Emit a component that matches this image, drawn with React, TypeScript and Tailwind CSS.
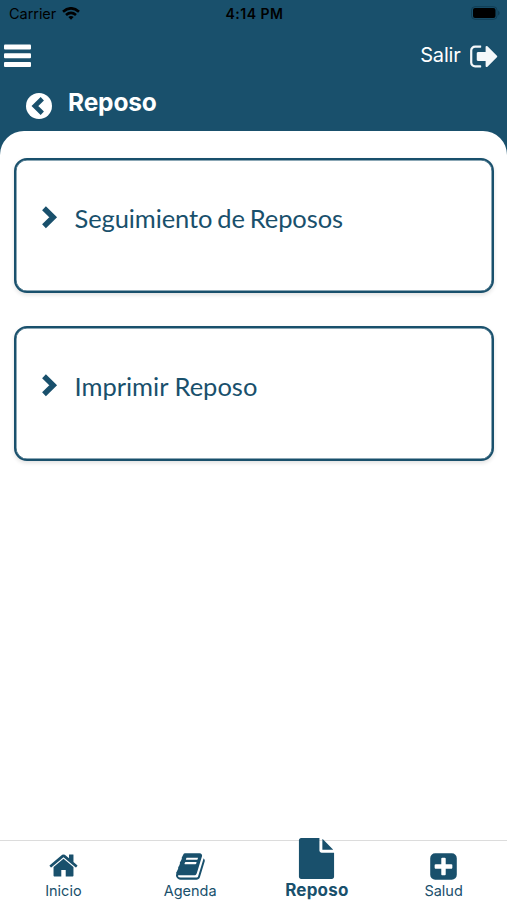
import type { ReactNode } from "react";

const paths = {
  home: "M1472 992v480q0 26-19 45t-45 19h-384v-384h-256v384h-384q-26 0-45-19t-19-45v-480q0-1 .5-3t.5-3l575-474 575 474q1 2 1 6zm223-69l-62 74q-8 9-21 11h-3q-13 0-21-7l-692-577-692 577q-12 8-24 7-13-2-21-11l-62-74q-8-10-7-23.500t11-21.500l719-599q32-26 76-26t76 26l244 204v-195q0-14 9-23t23-9h192q14 0 23 9t9 23v408l219 182q10 8 11 21.500t-7 23.500z",
  book: "M1639 478q40 57 18 129l-275 906q-19 64-76.500 107.500t-122.500 43.500h-923q-77 0-148.500-53.500t-99.500-131.500q-24-67-2-127 0-4 3-27t4-37q1-8-3-21.500t-3-19.500q2-11 8-21t16.500-23.500 16.500-23.500q23-38 45-91.500t30-91.500q3-10 .5-30t-.5-28q3-11 17-28t17-23q21-36 42-92t25-90q1-9-2.500-32t.5-28q4-13 22-30.500t22-22.500q19-26 42.500-84.500t27.500-96.500q1-8-3-25.500t-2-26.500q2-8 9-18t18-23 17-21q8-12 16.500-30.500t15-35 16-36 19.500-32 26.500-23.500 36-11.500 47.500 5.500l-1 3q38-9 51-9h761q74 0 114 56t18 130l-274 906q-36 119-71.500 153.500t-128.500 34.500h-869q-27 0-38 15-11 16-1 43 24 70 144 70h923q29 0 56-15.500t35-41.500l300-987q7-22 5-57 38 15 59 43zm-1064 2q-4 13 2 22.500t20 9.500h608q13 0 25.500-9.500t16.500-22.500l21-64q4-13-2-22.500t-20-9.500h-608q-13 0-25.500 9.500t-16.500 22.500zm-83 256q-4 13 2 22.500t20 9.500h608q13 0 25.500-9.500t16.500-22.500l21-64q4-13-2-22.500t-20-9.500h-608q-13 0-25.500 9.500t-16.500 22.500z",
  file: "M1152 512v-472q22 14 36 28l408 408q14 14 28 36h-472zm-128 32q0 40 28 68t68 28h544v1056q0 40-28 68t-68 28h-1344q-40 0-68-28t-28-68v-1600q0-40 28-68t68-28h800v544z",
  plus: "M1408 960v-128q0-26-19-45t-45-19h-320v-320q0-26-19-45t-45-19h-128q-26 0-45 19t-19 45v320h-320q-26 0-45 19t-19 45v128q0 26 19 45t45 19h320v320q0 26 19 45t45 19h128q26 0 45-19t19-45v-320h320q26 0 45-19t19-45zm256-544v960q0 119-84.500 203.500t-203.500 84.500h-960q-119 0-203.500-84.500t-84.500-203.500v-960q0-119 84.500-203.500t203.500-84.500h960q119 0 203.500 84.500t84.500 203.500z",
  exit: "M704 1440q0 4 1 20t.5 26.500-3 23.500-10 19.500-20.500 6.500h-320q-119 0-203.500-84.500t-84.500-203.500v-704q0-119 84.500-203.500t203.500-84.500h320q13 0 22.500 9.500t9.500 22.500q0 4 1 20t.5 26.500-3 23.500-10 19.500-20.500 6.500h-320q-66 0-113 47t-47 113v704q0 66 47 113t113 47h312l11.500 1 11.500 3 8 5.500 7 9 2 13.500zm928-544q0 26-19 45l-544 544q-19 19-45 19t-45-19-19-45v-288h-448q-26 0-45-19t-19-45v-384q0-26 19-45t45-19h448v-288q0-26 19-45t45-19 45 19l544 544q19 19 19 45z",
};

function Icon({ name, className }: { name: keyof typeof paths; className: string }) {
  return (
    <svg viewBox="0 0 1792 1792" className={className} fill="currentColor">
      <path d={paths[name]} />
    </svg>
  );
}

function StatusBar() {
  return (
    <div className="grid h-7 grid-cols-3 items-center pr-[7px] pl-[9px] text-black">
      <div className="flex items-center gap-[6px]">
        <span className="text-[14.500px] leading-7 tracking-[-0.05px]">Carrier</span>
        <svg viewBox="0 0 18 13" className="-mt-[2px] h-[13px] w-[18px]" fill="none" stroke="currentColor" strokeWidth="2.700">
          <path d="M1 4.700Q9 -2 17 4.700" />
          <path d="M4 8Q9 3.800 14 8" />
          <path d="M9 12.800L6.300 10Q9 7.900 11.700 10Z" fill="currentColor" stroke="none" />
        </svg>
      </div>
      <span className="text-center text-[14px] font-semibold leading-7 tracking-[0.500px]">4:14 PM</span>
      <svg viewBox="0 0 29 14" className="-mt-[2px] h-[14px] w-[29px] justify-self-end">
        <rect x="0.500" y="0.700" width="25.500" height="12.600" rx="3.500" fill="none" stroke="#103d54" />
        <rect x="2" y="2" width="22.500" height="10" rx="2" fill="#000" />
        <path d="M27 4.500Q28.700 5.500 28.700 7T27 9.500Z" fill="#103d54" />
      </svg>
    </div>
  );
}

function Card({ children }: { children: ReactNode }) {
  return (
    <button className="flex h-[135px] w-full items-start rounded-[13px] border-2 border-[#19506c] bg-white pt-[42px] pl-[25px] text-left text-[#19506c] shadow-[inset_0_0_0_0.5px_#19506c,0_2px_4px_rgba(0,0,0,0.12)]">
      <svg viewBox="0 0 18 26" className="mt-[1.500px] h-[26px] w-[18px] shrink-0" fill="none" stroke="currentColor" strokeWidth="5.400">
        <path d="M3 4.200L12.200 13.200L3 22.200" />
      </svg>
      <span className="ml-[15.500px] font-[Lato] text-[25.500px] leading-[32px]">{children}</span>
    </button>
  );
}

export default function App() {
  return (
    <div className="flex h-[900px] w-[507px] flex-col overflow-hidden bg-white font-[Inter,sans-serif]">
      <header className="h-[155px] shrink-0 bg-[#19506c] text-white">
        <StatusBar />
        <div className="flex h-[56px] items-center justify-between pr-[7.500px] pl-1">
          <svg viewBox="0 0 27 24" className="h-6 w-[27px]" fill="currentColor">
            <rect y="0.500" width="27" height="5" rx="1" />
            <rect y="9.200" width="27" height="5" rx="1" />
            <rect y="17.900" width="27" height="5" rx="1" />
          </svg>
          <div className="flex items-center gap-[8px]">
            <span className="-mt-[2px] text-[20px] leading-6 tracking-[-0.200px]">Salir</span>
            <Icon name="exit" className="h-[31px] w-[31px] text-[#f4f8fa]" />
          </div>
        </div>
        <div className="flex h-[47px] items-start pl-[26px]">
          <svg viewBox="0 0 26 26" className="mt-[9px] h-[26px] w-[26px]">
            <circle cx="13" cy="13" r="13" fill="#fff" />
            <path d="M16.300 5.800L8.900 13L16.300 20.200" fill="none" stroke="#19506c" strokeWidth="4.700" />
          </svg>
          <h1 className="ml-4 pt-[3px] text-[24.500px] font-bold leading-[30px] tracking-[-0.150px]">Reposo</h1>
        </div>
        <div className="h-6 rounded-t-[25px] bg-white" />
      </header>

      <main className="flex flex-1 flex-col gap-[33px] pr-[13px] pl-[14px] pt-[3px]">
        <Card>
          <span className="tracking-[-0.100px] [word-spacing:-1.500px]">Seguimiento de Reposos</span>
        </Card>
        <Card>Imprimir Reposo</Card>
      </main>

      <nav className="grid h-[60px] shrink-0 grid-cols-4 border-t border-[#dcdcdc] text-[#19506c]">
        <div className="flex flex-col items-center pt-[9px]">
          <Icon name="home" className="ml-[1px] h-[31px] w-[31px]" />
          <span className="text-[14.500px] leading-5">Inicio</span>
        </div>
        <div className="flex flex-col items-center pt-[10px]">
          <Icon name="book" className="ml-[2px] h-[31px] w-[31px]" />
          <span className="-mt-px text-[14.500px] leading-5">Agenda</span>
        </div>
        <div className="-mt-[3px] flex flex-col items-center">
          <Icon name="file" className="h-[41px] w-[41px] shrink-0" />
          <span className="pt-px text-[17px] font-bold leading-5 tracking-[0.200px]">Reposo</span>
        </div>
        <div className="flex flex-col items-center pt-[10px]">
          <Icon name="plus" className="h-[31px] w-[31px]" />
          <span className="-mt-px text-[14.500px] leading-5">Salud</span>
        </div>
      </nav>
    </div>
  );
}
